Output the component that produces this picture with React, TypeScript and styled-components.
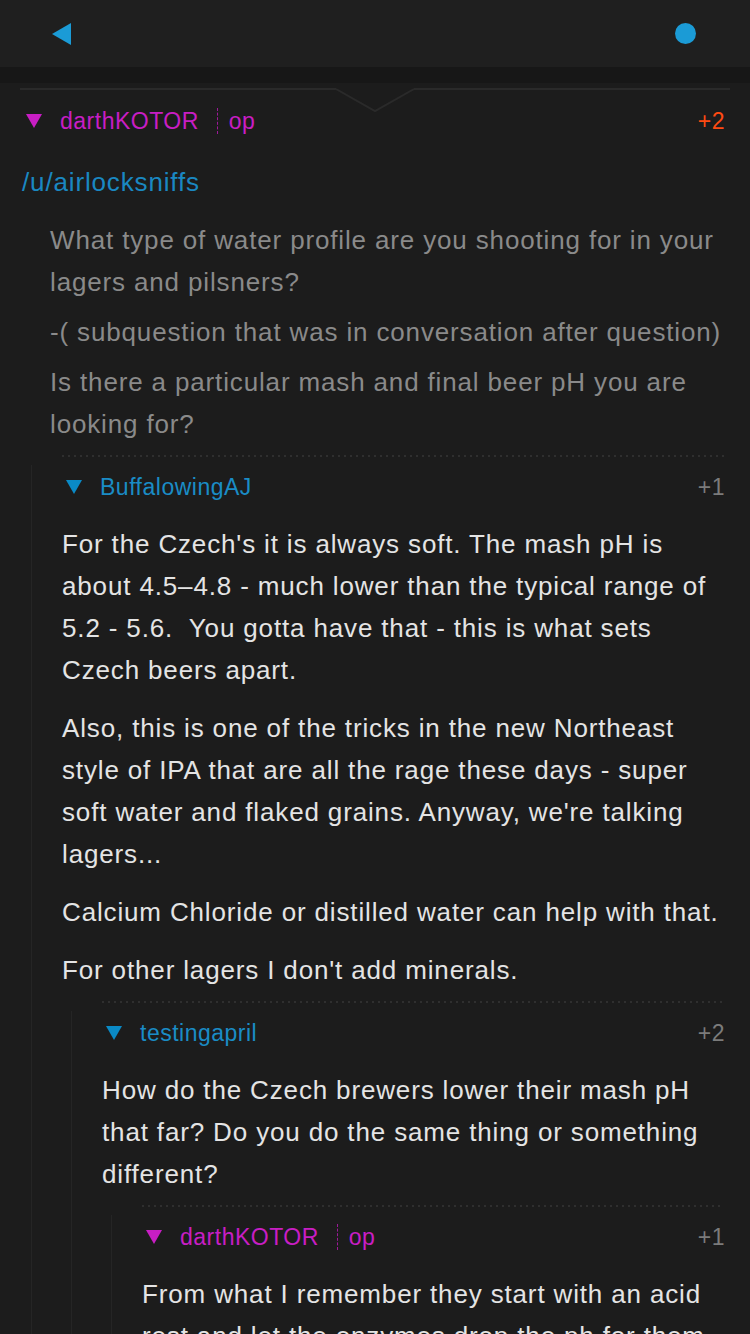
import React from 'react';
import styled, { createGlobalStyle } from 'styled-components';

const GlobalStyle = createGlobalStyle`
  html, body {
    margin: 0;
    padding: 0;
    background: #1c1c1c;
  }
  body {
    font-family: "Liberation Sans", Arial, sans-serif;
  }
`

type CommentData = {
  author: string;
  op?: boolean;
  score: string;
  hot?: boolean;
  body: React.ReactNode;
  replies?: CommentData[];
}

const Para = styled.p`
  margin: 0;
  & + & {
    margin-top: 16px;
  }
`

const LinkText = styled.span`
  color: #1a88c2;
`

const QuoteBlock = styled.div`
  margin: 16px 0 0 28px;
  color: #8a8a8a;
  ${Para} + ${Para} {
    margin-top: 8px;
  }
`

const thread: CommentData = {
  author: 'darthKOTOR',
  op: true,
  score: '+2',
  hot: true,
  body: <>
    <Para><LinkText>/u/airlocksniffs</LinkText></Para>
    <QuoteBlock>
      <Para>What type of water profile are you shooting for in your lagers and pilsners?</Para>
      <Para>-( subquestion that was in conversation after question)</Para>
      <Para>Is there a particular mash and final beer pH you are looking for?</Para>
    </QuoteBlock>
  </>,
  replies: [{
    author: 'BuffalowingAJ',
    score: '+1',
    body: <>
      <Para>For the Czech's it is always soft. The mash pH is about 4.5–4.8 - much lower than the typical range of 5.2 - 5.6.&nbsp; You gotta have that - this is what sets Czech beers apart.</Para>
      <Para>Also, this is one of the tricks in the new Northeast style of IPA that are all the rage these days - super soft water and flaked grains. Anyway, we're talking lagers...</Para>
      <Para>Calcium Chloride or distilled water can help with that.</Para>
      <Para>For other lagers I don't add minerals.</Para>
    </>,
    replies: [{
      author: 'testingapril',
      score: '+2',
      body: <Para>How do the Czech brewers lower their mash pH that far? Do you do the same thing or something different?</Para>,
      replies: [{
        author: 'darthKOTOR',
        op: true,
        score: '+1',
        body: <Para>From what I remember they start with an acid rest and let the enzymes drop the ph for them.</Para>,
      }],
    }],
  }],
}

const Screen = styled.div`
  width: 750px;
  height: 1334px;
  overflow: hidden;
  background: #1c1c1c;
`

const TopBar = styled.div`
  height: 67px;
  background: #1f1f1f;
  display: flex;
  align-items: center;
  justify-content: space-between;
  padding: 0 54px 0 52px;
  box-sizing: border-box;
`

const StatusDot = styled.div`
  width: 21px;
  height: 21px;
  border-radius: 50%;
  background: #1b9bd6;
`

const Shade = styled.div`
  height: 16px;
  background: #171717;
`

const Divider = styled.div`
  display: flex;
  align-items: flex-start;
  height: 11px;
  margin: 5px 20px 0;
`

const DividerLine = styled.div`
  flex: 1;
  height: 2px;
  background: #2a2a2a;
`

const Notch = styled.svg`
  flex: none;
  overflow: visible;
`

const Page = styled.div`
  padding: 0 20px 0 22px;
`

const Header = styled.div`
  display: flex;
  align-items: center;
  height: 44px;
  font-size: 23px;
  letter-spacing: 0.5px;
  padding-right: 5px;
`

const Toggle = styled.svg`
  flex: none;
  margin: 0 18px 0 4px;
`

const Author = styled.span<{ $op?: boolean }>`
  color: ${p => p.$op ? '#c81ec4' : '#1a8cc6'};
`

const OpTag = styled.span`
  margin-left: 18px;
  padding-left: 11px;
  height: 26px;
  line-height: 26px;
  border-left: 1px dashed #9c1a98;
  color: #c81ec4;
`

const Score = styled.span<{ $hot?: boolean }>`
  margin-left: auto;
  color: ${p => p.$hot ? '#ff4a12' : '#7b7b7b'};
`

const Body = styled.div<{ $root?: boolean }>`
  margin-top: ${p => p.$root ? 18 : 14}px;
  padding-bottom: 10px;
  font-size: 26px;
  letter-spacing: 0.85px;
  line-height: 42px;
  color: #e4e4e4;
`

const Reply = styled.div`
  margin-left: 40px;
`

const Separator = styled.div`
  height: 2px;
  margin-right: 6px;
  background-image: linear-gradient(to right, #2f2f2f 2px, transparent 2px);
  background-size: 6px 2px;
`

const Thread = styled.div`
  margin: 8px 0 0 -31px;
  padding-left: 30px;
  border-left: 1px solid #252525;
`

const Comment = ({ comment, root }: { comment: CommentData, root?: boolean }) => {
  return (
    <div>
      <Header>
        <Toggle width="16" height="14" viewBox="0 0 16 14">
          <polygon points="0,0 16,0 8,14" fill={comment.op ? '#c81ec4' : '#0a8ac6'} />
        </Toggle>
        <Author $op={comment.op}>{comment.author}</Author>
        {comment.op && <OpTag>op</OpTag>}
        <Score $hot={comment.hot}>{comment.score}</Score>
      </Header>
      <Body $root={root}>{comment.body}</Body>
      {comment.replies?.map((reply, i) => (
        <Reply key={i}>
          <Separator />
          <Thread>
            <Comment comment={reply} />
          </Thread>
        </Reply>
      ))}
    </div>
  )
}

const App = () => {
  return (
    <Screen>
      <GlobalStyle />
      <TopBar>
        <svg width="19" height="22" viewBox="0 0 19 22">
          <polygon points="0,11 19,0 19,22" fill="#1b9bd6" />
        </svg>
        <StatusDot />
      </TopBar>
      <Shade />
      <Divider>
        <DividerLine />
        <Notch width="78" height="24" viewBox="0 0 78 24">
          <polyline points="0,1 39,23 78,1" fill="none" stroke="#2a2a2a" strokeWidth="2" />
        </Notch>
        <DividerLine />
      </Divider>
      <Page>
        <Comment comment={thread} root />
      </Page>
    </Screen>
  )
}

export default App;
